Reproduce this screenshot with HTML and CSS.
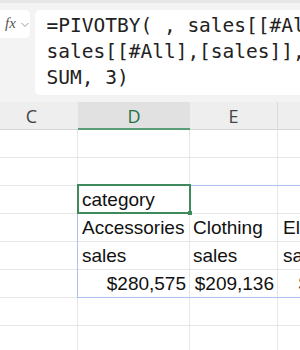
FILE: index.html
```html
<!DOCTYPE html>
<html>
<head>
<meta charset="utf-8">
<link rel="stylesheet" href="styles.css">
</head>
<body>
<div class="formula-bar">
  <div class="fx-box">
    <span class="fx">fx</span>
    <svg class="chev" width="8" height="6" viewBox="0 0 8 6"><path d="M0.5 1 L4 4.5 L7.5 1" fill="none" stroke="#9a9a9a" stroke-width="1"/></svg>
  </div>
  <div class="formula-box">
    <div class="formula-text">=PIVOTBY( , sales[[#All],<br>sales[[#All],[sales]],<br>SUM, 3)</div>
  </div>
</div>
<div class="col-headers">
  <div class="ch c">C</div>
  <div class="ch d sel">D</div>
  <div class="ch e">E</div>
  <div class="ch f"></div>
</div>
<div class="sheet">
  <div class="cell c"></div><div class="cell d"></div><div class="cell e"></div><div class="cell f"></div>
  <div class="cell c"></div><div class="cell d"></div><div class="cell e"></div><div class="cell f"></div>
  <div class="cell c"></div><div class="cell d">category</div><div class="cell e"></div><div class="cell f"></div>
  <div class="cell c"></div><div class="cell d">Accessories</div><div class="cell e">Clothing</div><div class="cell f">Electronics</div>
  <div class="cell c"></div><div class="cell d">sales</div><div class="cell e">sales</div><div class="cell f">sales</div>
  <div class="cell c"></div><div class="cell d num">$280,575</div><div class="cell e num">$209,136</div><div class="cell f num">$412,804</div>
  <div class="cell c"></div><div class="cell d"></div><div class="cell e"></div><div class="cell f"></div>
  <div class="cell c"></div><div class="cell d"></div><div class="cell e"></div><div class="cell f"></div>
  <div class="spill"></div>
  <div class="active"><span class="handle"></span></div>
</div>
</body>
</html>
```
FILE: styles.css
```css
html, body {
  margin: 0;
  padding: 0;
  width: 300px;
  height: 350px;
  overflow: hidden;
  background: #ffffff;
}
.formula-bar {
  height: 102px;
  box-sizing: border-box;
  background: #f3f3f3;
  border-top: 3px solid #e6e6e6;
  padding-top: 7px;
  display: flex;
  align-items: flex-start;
  gap: 5px;
  width: 340px;
}
.fx-box {
  width: 30px;
  height: 28px;
  background: #ffffff;
  border-radius: 0 5px 5px 0;
  display: flex;
  align-items: center;
  box-sizing: border-box;
  padding-left: 5px;
}
.fx {
  font-family: "Liberation Serif", serif;
  font-style: italic;
  font-size: 15px;
  color: #555555;
  line-height: 1;
  margin-top: -2px;
}
.chev {
  margin-left: 5px;
  margin-top: 1px;
}
.formula-box {
  flex: 1;
  height: 85px;
  background: #ffffff;
  border-radius: 5px;
  box-sizing: border-box;
  padding: 3px 0 0 12px;
}
.formula-text {
  font-family: "DejaVu Sans Mono", "Liberation Mono", monospace;
  font-size: 19.5px;
  line-height: 26px;
  color: #222222;
  white-space: nowrap;
}
.col-headers {
  display: grid;
  grid-template-columns: 78px 112px 88px 104px;
  height: 28px;
  background: #eeeeee;
}
.ch {
  box-sizing: border-box;
  border-bottom: 1px solid #d4d4d4;
  border-right: 1px solid #dcdcdc;
  font-family: "Open Sans", "Liberation Sans", sans-serif;
  font-size: 18px;
  color: #444444;
  display: flex;
  align-items: center;
  justify-content: center;
  padding-top: 1px;
}
.ch.c {
  padding-right: 15px;
  border-right: none;
}
.ch.sel {
  background: #e1e1e1;
  color: #217346;
  border-bottom: 2px solid #5a9e77;
  border-right: none;
}
.sheet {
  position: relative;
  display: grid;
  grid-template-columns: 78px 112px 88px 104px;
  grid-auto-rows: 28px;
}
.cell {
  box-sizing: border-box;
  border-right: 1px solid #e6e6e6;
  border-bottom: 1px solid #e6e6e6;
  font-family: "Liberation Sans", Arial, sans-serif;
  font-size: 19px;
  line-height: 28px;
  color: #111111;
  padding: 0 3px 0 4px;
  white-space: nowrap;
  overflow: hidden;
}
.cell.e {
  padding-left: 3px;
}
.cell.f {
  padding-left: 5px;
}
.cell.num {
  text-align: right;
  padding-right: 3px;
}
.spill {
  position: absolute;
  left: 77px;
  top: 55px;
  width: 300px;
  height: 111px;
  border: 1px solid #adc3ec;
  pointer-events: none;
}
.active {
  position: absolute;
  left: 77px;
  top: 54px;
  width: 114px;
  height: 30px;
  box-sizing: border-box;
  border: 2px solid #3f8a5c;
}
.handle {
  position: absolute;
  right: -3px;
  bottom: -3px;
  width: 4px;
  height: 4px;
  background: #3f8a5c;
}
```
